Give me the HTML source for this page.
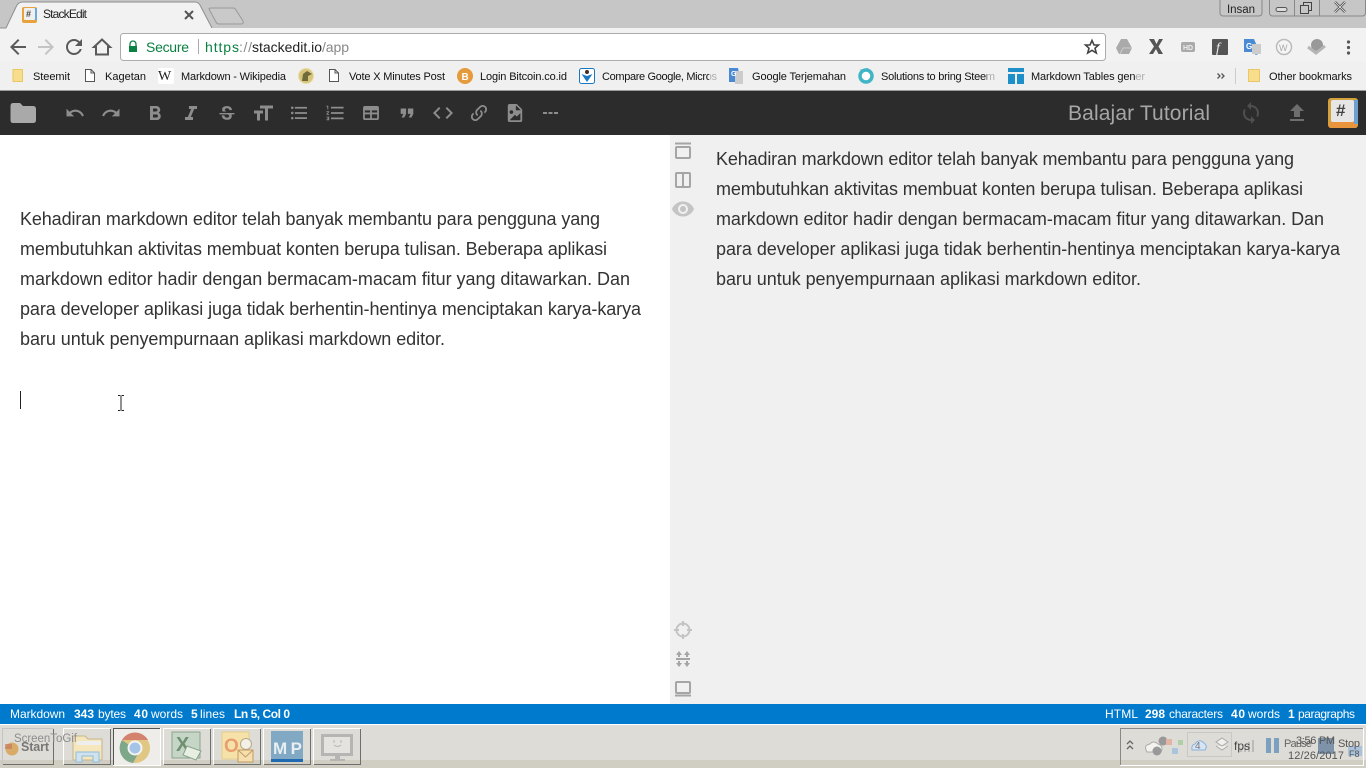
<!DOCTYPE html>
<html><head><meta charset="utf-8"><title>StackEdit</title>
<style>
html,body{margin:0;padding:0;width:1366px;height:768px;overflow:hidden;background:#fff}
svg{display:block;position:absolute;left:0;top:0}
text{font-family:"Liberation Sans",sans-serif}
.bm{font-size:11px;fill:#111}
.s{font-size:12px;fill:#fff}
.b{font-weight:bold}
.p{font-size:18px;fill:#333}
</style></head><body>
<svg width="1366" height="768" viewBox="0 0 1366 768">
<!-- tab strip -->
<rect width="1366" height="29" fill="#c6c6c6"/>
<rect y="28" width="1366" height="1" fill="#999"/>
<path d="M0 28H6L16 7Q18 2 23 2H195Q199 2 201 7L212 28H1366V62H0Z" fill="#f2f2f2"/>
<path d="M0 28H6L16 7Q18 2 23 2H195Q199 2 201 7L212 28" fill="none" stroke="#8f8f8f"/>
<path d="M209 9Q209 8 211 8H233Q235 8 236 10L243 21Q244 24 241 24H219Q217 24 216 22Z" fill="#c9c9c9" stroke="#999"/>
<rect x="22" y="7" width="15" height="16" rx="2" fill="#e8a33d"/><rect x="34" y="8" width="3" height="12" fill="#6fa8dc"/><rect x="24" y="8" width="11" height="12" rx="1" fill="#f0f0f0"/>
<text x="26" y="17" font-size="9" font-weight="bold" fill="#444">#</text>
<text x="43" y="18" font-size="12" fill="#222" textLength="44">StackEdit</text>
<path d="M185 11L193 19M193 11L185 19" stroke="#555" stroke-width="2"/>
<!-- window controls -->
<rect x="1220" y="-3" width="42" height="19" rx="3" fill="#c6c6c6" stroke="#888"/>
<text x="1227" y="13" font-size="11.5" fill="#222" textLength="28">Insan</text>
<rect x="1269.500" y="-3" width="96" height="19" rx="3" fill="#c6c6c6" stroke="#888"/>
<path d="M1294.500 0V16M1319.500 0V16" stroke="#888"/>
<rect x="1276" y="7.500" width="11" height="4" rx="2" fill="#ddd" stroke="#555"/>
<rect x="1300.500" y="5.500" width="8" height="8" fill="none" stroke="#444"/><path d="M1303.500 5V2.500H1311.500V10.500H1309" fill="none" stroke="#444"/>
<path d="M1335 2L1345 12M1345 2L1335 12" stroke="#555" stroke-width="2.500"/><path d="M1335 2L1345 12M1345 2L1335 12" stroke="#eee" stroke-width=".8"/>
<!-- nav -->
<g transform="translate(6,35)" fill="#5a5a5a"><path d="M20 11H7.830l5.590-5.590L12 4l-8 8 8 8 1.410-1.410L7.830 13H20v-2z"/></g>
<g transform="translate(34,35)" fill="#c4c4c4"><path d="M4 11h12.170l-5.590-5.590L12 4l8 8-8 8-1.410-1.410L16.170 13H4v-2z"/></g>
<g transform="translate(62,35)" fill="#5a5a5a"><path d="M17.650 6.350C16.200 4.900 14.210 4 12 4c-4.420 0-7.990 3.580-7.990 8s3.570 8 7.990 8c3.730 0 6.840-2.550 7.730-6h-2.080c-.82 2.330-3.040 4-5.650 4-3.310 0-6-2.690-6-6s2.690-6 6-6c1.660 0 3.140.69 4.220 1.780L13 11h7V4l-2.350 2.350z"/></g>
<path d="M102 39.500L110 47H108V54.500H96V47H94Z" fill="none" stroke="#5a5a5a" stroke-width="2"/>
<rect x="120.500" y="33.500" width="985" height="27" rx="3" fill="#fff" stroke="#ababab"/>
<path d="M130 46V44a3 3 0 0 1 6 0V46" fill="none" stroke="#0b8043" stroke-width="1.300"/><rect x="129" y="46" width="8" height="6" fill="#0b8043"/>
<text x="146" y="52" font-size="14" fill="#0b8043" textLength="43">Secure</text>
<rect x="198" y="39" width="1" height="15" fill="#aaa"/>
<text x="205" y="52" font-size="14" fill="#0b8043" textLength="34">https</text>
<text x="239" y="52" font-size="14" fill="#888" textLength="13">://</text>
<text x="252" y="52" font-size="14" fill="#222" textLength="70">stackedit.io</text>
<text x="322" y="52" font-size="14" fill="#888" textLength="27">/app</text>
<path d="M1092 40.500L1094 45H1098.500L1095 48.200L1096.300 53L1092 50.300L1087.700 53L1089 48.200L1085.500 45H1090Z" fill="none" stroke="#444" stroke-width="1.600"/>
<!-- extensions -->
<path d="M1121 39H1127L1132 48L1129 54H1119L1116 48Z" fill="#aaa"/><path d="M1120 54L1123 48H1132" stroke="#ccc" fill="none"/>
<path d="M1149 39H1154L1156.500 44L1159 39H1163L1158.500 46.500L1163 54H1158.500L1156 49L1153 54H1149L1154 46.500Z" fill="#555"/>
<rect x="1181" y="42" width="14" height="10" rx="2" fill="#aaa"/><text x="1183" y="50" font-size="7" font-weight="bold" fill="#eee">HD</text>
<rect x="1212" y="39" width="16" height="16" rx="1" fill="#555"/><text x="1216" y="52" font-size="14" style="font-family:'Liberation Serif',serif;font-style:italic" fill="#eee">f</text>
<path d="M1244 39H1254L1260 53L1256 55L1252 52H1244Z" fill="#4a8ad4"/><rect x="1252" y="44" width="9" height="10" fill="#ccc"/><text x="1246" y="49" font-size="8" font-weight="bold" fill="#fff">G</text>
<circle cx="1284" cy="47" r="7.500" fill="#f5f5f5" stroke="#bbb" stroke-width="1.500"/><text x="1279" y="51" font-size="9" fill="#aaa">W</text>
<circle cx="1317" cy="45" r="6" fill="#999"/><path d="M1308 47L1316 53L1325 46" fill="none" stroke="#b5b5b5" stroke-width="3"/>
<circle cx="1348.500" cy="42" r="1.600" fill="#555"/><circle cx="1348.500" cy="47.500" r="1.600" fill="#555"/><circle cx="1348.500" cy="53" r="1.600" fill="#555"/>
<!-- bookmarks -->
<rect y="62" width="1366" height="28" fill="#f0f0f0"/>
<rect y="90" width="1366" height="1" fill="#9b9b9b"/>
<path d="M13 69.500H22.500V81.500H13Z" fill="#f8dd8c" stroke="#e8c765"/>
<path d="M85.500 69.500H91L94.500 73V81.500H85.500Z" fill="#fff" stroke="#555"/><path d="M91 69.500V73H94.500" fill="none" stroke="#555"/>
<rect x="158" y="68" width="16" height="16" rx="2" fill="#fff"/><text x="158" y="80" font-size="14" style="font-family:'Liberation Serif',serif" fill="#222" textLength="16">W</text>
<circle cx="306" cy="76" r="7.500" fill="#d9c47c" stroke="#e8dca8"/><path d="M302 81L303 74L307 71L312 74L308 76V81Z" fill="#6f6a3a"/>
<path d="M329.500 69.500H335L338.500 73V81.500H329.500Z" fill="#fff" stroke="#555"/><path d="M335 69.500V73H338.500" fill="none" stroke="#555"/>
<circle cx="465" cy="76" r="8" fill="#e59a3c"/><text x="461.500" y="80" font-size="10" font-weight="bold" fill="#fff">B</text>
<rect x="579.500" y="68.500" width="15" height="15" rx="2" fill="#fff" stroke="#1a78c2"/><path d="M581.500 74L587 76L592.500 74L587 82Z" fill="#1a78c2"/><circle cx="587" cy="72" r="2" fill="#4a2c22"/>
<path d="M729 68H738L741 82H729Z" fill="#4a8ad4"/><rect x="735" y="71" width="8" height="13" fill="#ccc"/><text x="731" y="76" font-size="7" font-weight="bold" fill="#fff">G</text>
<circle cx="866" cy="76" r="6" fill="#fff" stroke="#3fb5c6" stroke-width="3.500"/><path d="M859 70L868 68V71Z" fill="#3fb5c6"/>
<rect x="1008" y="68" width="16" height="4" fill="#1f8fc9"/><rect x="1008" y="74" width="7" height="10" fill="#1f8fc9"/><rect x="1017" y="74" width="7" height="10" fill="#1f8fc9"/>
<path d="M1217.500 73.500L1220 76L1217.500 78.500M1221.500 73.500L1224 76L1221.500 78.500" fill="none" stroke="#555" stroke-width="1.300"/>
<rect x="1235" y="68" width="1" height="16" fill="#ccc"/>
<path d="M1248.500 69.500H1259.500V81.500H1248.500Z" fill="#f8dd8c" stroke="#e8c765"/>
<text class="bm" x="33" y="80" textLength="37">Steemit</text>
<text class="bm" x="105" y="80" textLength="41">Kagetan</text>
<text class="bm" x="181" y="80" textLength="105">Markdown - Wikipedia</text>
<text class="bm" x="349" y="80" textLength="96">Vote X Minutes Post</text>
<text class="bm" x="480" y="80" textLength="87">Login Bitcoin.co.id</text>
<text class="bm" x="602" y="80" textLength="115">Compare Google, Micros</text>
<text class="bm" x="752" y="80" textLength="94">Google Terjemahan</text>
<text class="bm" x="881" y="80" textLength="114">Solutions to bring Steem</text>
<text class="bm" x="1031" y="80" textLength="114">Markdown Tables gener</text>
<text class="bm" x="1269" y="80" textLength="83">Other bookmarks</text>
<rect x="709" y="68" width="9" height="16" fill="#f0f0f0" opacity=".7"/><rect x="987" y="68" width="9" height="16" fill="#f0f0f0" opacity=".7"/><rect x="1136" y="68" width="9" height="16" fill="#f0f0f0" opacity=".7"/>
<!-- dark nav -->
<rect y="91" width="1366" height="44" fill="#2c2c2c"/>
<path d="M10.500 106Q10.500 103 13 103H20L23 106H33Q36 106 36 109V120Q36 123 33 123H13Q10.500 123 10.500 120Z" fill="#a9a9a9"/>
<g fill="#8d8d8d">
<g transform="translate(64.800,102.800) scale(.85)"><path d="M12.500 8c-2.650 0-5.050.99-6.900 2.600L2 7v9h9l-3.620-3.620c1.390-1.160 3.160-1.880 5.120-1.880 3.540 0 6.550 2.310 7.600 5.500l2.370-.78C21.080 11.030 17.150 8 12.500 8z"/></g>
<g transform="translate(100.800,102.800) scale(.85)"><path d="M18.400 10.600C16.550 8.990 14.150 8 11.500 8c-4.650 0-8.580 3.030-9.960 7.220L3.900 16c1.050-3.190 4.050-5.500 7.600-5.500 1.950 0 3.730.72 5.120 1.880L13 16h9V7l-3.600 3.600z"/></g>
<g transform="translate(143,102)"><path d="M15.600 10.790c.97-.67 1.650-1.770 1.650-2.790 0-2.260-1.750-4-4-4H7v14h7.040c2.090 0 3.710-1.700 3.710-3.790 0-1.520-.86-2.820-2.150-3.420zM10 6.500h3c.83 0 1.500.67 1.500 1.500s-.67 1.500-1.500 1.500h-3v-3zm3.500 9H10v-3h3.500c.83 0 1.500.67 1.500 1.500s-.67 1.500-1.500 1.500z"/></g>
<g transform="translate(179,102)"><path d="M10 4v3h2.210l-3.420 8H6v3h8v-3h-2.210l3.420-8H18V4z"/></g>
<g transform="translate(218.800,104.800) scale(.68)"><path d="M23,12V14H18.610C19.610,16.140 19.560,22 12.380,22C4.050,22.050 4.370,15.500 4.370,15.500L8.340,15.550C8.370,18.920 11.500,18.920 12.120,18.880C12.760,18.830 15.150,18.840 15.340,16.500C15.420,15.410 14.320,14.580 13.120,14H1V12H23M19.410,7.890L15.430,7.860C15.430,7.860 15.600,5.090 12.150,5.080C8.700,5.060 9,7.280 9,7.560C9.040,7.840 9.340,9.220 12,9.880H5.710C5.710,9.880 2.220,3 10.740,2C19.450,1 19.410,7.890 19.410,7.890Z"/></g>
<g transform="translate(251,101.500)"><path d="M9 4v3h5v12h3V7h5V4H9zm-6 8h3v7h3v-7h3V9H3v3z"/></g>
<g transform="translate(288.800,102.600) scale(.865)"><path d="M4 10.500c-.83 0-1.500.67-1.500 1.500s.67 1.500 1.500 1.500 1.500-.67 1.500-1.500-.67-1.500-1.500-1.500zm0-6c-.83 0-1.500.67-1.500 1.500S3.170 7.500 4 7.500 5.500 6.830 5.500 6 4.830 4.500 4 4.500zm0 12c-.83 0-1.500.68-1.500 1.500s.68 1.500 1.500 1.500 1.500-.68 1.500-1.500-.67-1.500-1.500-1.500zM7 19h14v-2H7v2zm0-6h14v-2H7v2zm0-8v2h14V5H7z"/></g>
<g transform="translate(324.650,102.200) scale(.9)"><path d="M2 17h2v.5H3v1h1v.5H2v1h3v-4H2v1zm1-9h1V4H2v1h1v3zm-1 3h1.800L2 13.100v.9h3v-1H3.200L5 10.900V10H2v1zm5-6v2h14V5H7zm0 14h14v-2H7v2zm0-6h14v-2H7v2z"/></g>
<g transform="translate(360.440,102.440) scale(.88)"><path fill-rule="evenodd" d="M5 4H19A2 2 0 0 1 21 6V18A2 2 0 0 1 19 20H5A2 2 0 0 1 3 18V6A2 2 0 0 1 5 4ZM5 9V11.500H11V9ZM13 9V11.500H19V9ZM5 13.500V18H11V13.500ZM13 13.500V18H19V13.500Z"/></g>
<g transform="translate(396.200,102.200) scale(.9)"><path d="M6 17h3l2-4V7H5v6h3zm8 0h3l2-4V7h-6v6h3z"/></g>
<g transform="translate(431,101)"><path d="M9.400 16.600L4.800 12l4.600-4.600L8 6l-6 6 6 6 1.400-1.400zm5.200 0l4.600-4.600-4.600-4.600L16 6l6 6-6 6-1.400-1.400z"/></g>
<g transform="translate(468.560,102.560) scale(.87)"><path d="M10.590,13.410C11,13.800 11,14.440 10.590,14.830C10.200,15.220 9.560,15.220 9.170,14.830C7.220,12.880 7.220,9.710 9.170,7.760V7.760L12.710,4.220C14.660,2.270 17.830,2.270 19.780,4.220C21.730,6.170 21.730,9.340 19.780,11.290L18.290,12.780C18.300,11.960 18.170,11.140 17.890,10.360L18.360,9.880C19.540,8.710 19.540,6.810 18.360,5.640C17.190,4.460 15.290,4.460 14.120,5.640L10.590,9.170C9.410,10.340 9.410,12.240 10.590,13.410M13.410,9.170C13.800,8.780 14.440,8.780 14.830,9.170C16.780,11.120 16.780,14.290 14.830,16.240V16.240L11.290,19.780C9.340,21.730 6.170,21.730 4.220,19.780C2.270,17.830 2.270,14.660 4.220,12.710L5.710,11.220C5.700,12.040 5.830,12.860 6.110,13.650L5.640,14.120C4.460,15.290 4.460,17.190 5.640,18.360C6.810,19.540 8.710,19.540 9.880,18.360L13.410,14.830C14.590,13.660 14.590,11.760 13.410,10.590C13,10.200 13,9.560 13.410,9.170Z"/></g>
<g transform="translate(504.200,102.200) scale(.9)"><path d="M13 9h5.500L13 3.500V9M6 2h8l6 6v12a2 2 0 0 1-2 2H6a2 2 0 0 1-2-2V4a2 2 0 0 1 2-2m0 18h12v-8l-4 4-2-2-6 6M8 9a2 2 0 0 0-2 2 2 2 0 0 0 2 2 2 2 0 0 0 2-2 2 2 0 0 0-2-2z"/></g>
<rect x="543" y="112" width="4" height="2"/><rect x="548.500" y="112" width="4" height="2"/><rect x="554" y="112" width="4" height="2"/>
</g>
<text x="1068" y="120" font-size="21" fill="#a6a6a6" textLength="142">Balajar Tutorial</text>
<g transform="translate(1239,101)" fill="#4f4f4f"><path d="M12 4V1L8 5l4 4V6c3.310 0 6 2.690 6 6 0 1.010-.25 1.970-.7 2.800l1.460 1.460C19.540 15.030 20 13.570 20 12c0-4.420-3.580-8-8-8zm0 14c-3.310 0-6-2.690-6-6 0-1.010.25-1.970.7-2.800L5.240 7.740C4.460 8.970 4 10.430 4 12c0 4.420 3.580 8 8 8v3l4-4-4-4v3z"/></g>
<g transform="translate(1285,101)" fill="#6e6e6e"><path d="M5 20h14v-2H5v2zm0-10h4v6h6v-6h4l-7-7-7 7z"/></g>
<rect x="1328" y="98" width="30" height="30" rx="3" fill="#d4a23c"/><rect x="1329" y="122" width="28" height="6" rx="2" fill="#e8943c"/><rect x="1354" y="100" width="4" height="24" fill="#6f9fd0"/><rect x="1331" y="100" width="23" height="22" rx="2" fill="#e6e6e6"/>
<text x="1336" y="116" font-size="17" font-weight="bold" fill="#444">#</text>
<!-- panes -->
<rect x="670" y="135" width="696" height="569" fill="#f0f0f0"/>
<g fill="none" stroke="#a5a5a5" stroke-width="2">
<rect x="676" y="147" width="14" height="11" rx="1"/><path d="M675 143.500H691"/>
<rect x="676" y="173" width="14" height="14" rx="1"/><path d="M683 173V187"/>
<rect x="676" y="682" width="14" height="11" rx="1"/><path d="M675 695.500H691"/>
<path d="M676 659H690"/>
</g>
<g fill="none" stroke="#c4c4c4" stroke-width="2"><circle cx="683" cy="630" r="6.500"/><path d="M683 621V626M683 634V639M674 630H679M687 630H692"/></g>
<g transform="translate(671,197)" fill="#c4c4c4"><path d="M12 4.500C7 4.500 2.730 7.610 1 12c1.730 4.390 6 7.500 11 7.500s9.270-3.110 11-7.500c-1.730-4.390-6-7.500-11-7.500zM12 17c-2.760 0-5-2.240-5-5s2.240-5 5-5 5 2.240 5 5-2.240 5-5 5zm0-8c-1.660 0-3 1.340-3 3s1.340 3 3 3 3-1.340 3-3-1.340-3-3-3z"/></g>
<g fill="#a5a5a5"><path d="M679 651L682 655H680V657H678V655H676ZM687 651L690 655H688V657H686V655H684ZM678 661H680V663H682L679 667L676 663H678ZM686 661H688V663H690L687 667L684 663H686Z"/></g>
<text class="p" x="20" y="225" textLength="580">Kehadiran markdown editor telah banyak membantu para pengguna yang</text>
<text class="p" x="20" y="255" textLength="587">membutuhkan aktivitas membuat konten berupa tulisan. Beberapa aplikasi</text>
<text class="p" x="20" y="285" textLength="610">markdown editor hadir dengan bermacam-macam fitur yang ditawarkan. Dan</text>
<text class="p" x="20" y="315" textLength="621">para developer aplikasi juga tidak berhentin-hentinya menciptakan karya-karya</text>
<text class="p" x="20" y="345" textLength="425">baru untuk penyempurnaan aplikasi markdown editor.</text>
<text class="p" x="716" y="165" textLength="578">Kehadiran markdown editor telah banyak membantu para pengguna yang</text>
<text class="p" x="716" y="195" textLength="587">membutuhkan aktivitas membuat konten berupa tulisan. Beberapa aplikasi</text>
<text class="p" x="716" y="225" textLength="608">markdown editor hadir dengan bermacam-macam fitur yang ditawarkan. Dan</text>
<text class="p" x="716" y="255" textLength="624">para developer aplikasi juga tidak berhentin-hentinya menciptakan karya-karya</text>
<text class="p" x="716" y="285" textLength="425">baru untuk penyempurnaan aplikasi markdown editor.</text>
<rect x="20" y="391" width="1" height="18" fill="#222"/>
<path d="M118 395.500H120.500M121.500 395.500H124M118 410.500H120.500M121.500 410.500H124M121 396V410" stroke="#222" fill="none"/>
<!-- status -->
<rect y="704" width="1366" height="20" fill="#007acc"/>
<text class="s" x="10" y="718" textLength="55">Markdown</text>
<text class="s b" x="74" y="718" textLength="20">343</text><text class="s" x="98" y="718" textLength="28">bytes</text>
<text class="s b" x="134" y="718" textLength="14">40</text><text class="s" x="151" y="718" textLength="32">words</text>
<text class="s b" x="191" y="718" textLength="6">5</text><text class="s" x="200" y="718" textLength="25">lines</text>
<text class="s b" x="234" y="718" textLength="56">Ln 5, Col 0</text>
<text class="s" x="1105" y="718" textLength="33">HTML</text>
<text class="s b" x="1145" y="718" textLength="20">298</text><text class="s" x="1169" y="718" textLength="54">characters</text>
<text class="s b" x="1231" y="718" textLength="14">40</text><text class="s" x="1248" y="718" textLength="32">words</text>
<text class="s b" x="1288" y="718" textLength="5">1</text><text class="s" x="1298" y="718" textLength="57">paragraphs</text>
<!-- taskbar -->
<rect y="724" width="1366" height="1" fill="#fff"/>
<rect y="725" width="1366" height="35" fill="#dedcd7"/>
<rect y="760" width="1366" height="8" fill="#d0cec3"/>
<g fill="none" stroke="#6e6e6e">
<path d="M2.500 764.500V728.500H53.500" stroke="#c4c4c4"/><path d="M53.500 729V764.500H3"/>
<path d="M63.500 764.500V728.500H110.500" stroke="#fff"/><path d="M110.500 729V764.500H64"/>
<path d="M163.500 764.500V728.500H210.500" stroke="#fff"/><path d="M210.500 729V764.500H164"/>
<path d="M213.500 764.500V728.500H260.500" stroke="#fff"/><path d="M260.500 729V764.500H214"/>
<path d="M263.500 764.500V728.500H310.500" stroke="#fff"/><path d="M310.500 729V764.500H264"/>
<path d="M313.500 764.500V728.500H360.500" stroke="#fff"/><path d="M360.500 729V764.500H314"/>
</g>
<rect x="113" y="728" width="47" height="37" fill="#eeedea"/>
<path d="M113.500 765V728.500H160" stroke="#555" fill="none"/><path d="M113 765.500H160.500V728" stroke="#fff" fill="none"/>
<circle cx="12" cy="749" r="6.500" fill="#d6a04c" opacity=".8"/><path d="M5 744H12V749H5Z" fill="#c87a5c" opacity=".7"/>
<text x="21" y="751" font-size="12.500" font-weight="bold" fill="#777" textLength="28">Start</text>
<!-- folder -->
<path d="M73 736H85L88 739H102V760H73Z" fill="#f5e6bc" stroke="#c4b68e"/><rect x="77" y="741" width="24" height="4" fill="#eee"/>
<path d="M76 762V752H99V762H93V756H82V762Z" fill="#cfe2ee" stroke="#8fbcdb"/>
<text x="14" y="742" font-size="11.500" fill="#8d8d8d" textLength="63">ScreenToGif</text>
<!-- chrome -->
<circle cx="135" cy="748" r="15" fill="#e0c784"/><path d="M122 740A15 15 0 0 1 148 740H135Z" fill="#d4826e"/><path d="M122 740A15 15 0 0 0 133 763L139 752Z" fill="#7fa88a"/><circle cx="135" cy="748" r="7.500" fill="#f4f4f4"/><circle cx="135" cy="748" r="5.500" fill="#a5c4e8"/>
<!-- excel -->
<rect x="172" y="732" width="28" height="26" fill="#c5d6c6" stroke="#8aa38c"/><text x="176" y="751" font-size="20" font-weight="bold" fill="#6f8f72">X</text><path d="M187 746L201 751L196 760L183 755Z" fill="#e6efe2" stroke="#8aa38c"/>
<!-- outlook -->
<rect x="222" y="732" width="27" height="27" fill="#f6e2a8" stroke="#e5cd8a"/><text x="224" y="752" font-size="19" font-weight="bold" fill="#e89f70">O</text><circle cx="246" cy="744" r="5.500" fill="#f3f0e6" stroke="#b3a98c"/><rect x="238" y="750" width="15" height="12" fill="#f6dfae" stroke="#c49a60"/><path d="M238 750L245.500 757L253 750" fill="none" stroke="#c49a60"/>
<!-- MP -->
<rect x="271" y="731" width="32" height="31" fill="#82a9c4"/><rect x="271" y="759" width="32" height="3" fill="#1f6ab0"/>
<text x="273" y="754" font-size="17" font-weight="bold" fill="#e8eef2" textLength="29">MP</text>
<!-- monitor -->
<rect x="322.500" y="735.500" width="29" height="19" fill="#e4e3df" stroke="#b5b5b3" stroke-width="3"/><rect x="335" y="756" width="5" height="3" fill="#b5b5b3"/><rect x="330" y="759" width="15" height="2" fill="#b5b5b3"/>
<path d="M334 740V743M341 740V743M334 745Q337.500 748 341 745" fill="none" stroke="#b5b5b3"/>
<!-- tray -->
<path d="M1120.500 765V728.500H1363" stroke="#888" fill="none"/><path d="M1120 765.500H1363.500V728" stroke="#fff" fill="none"/>
<path d="M1127 744L1130 741L1133 744M1127 749L1130 746L1133 749" fill="none" stroke="#666" stroke-width="1.300"/>
<path d="M1147 752Q1143 745 1150 744Q1153 740 1158 744Q1164 746 1161 752Z" fill="#f3f2ee" stroke="#aaa"/>
<circle cx="1157" cy="751" r="4.500" fill="#999"/><circle cx="1163" cy="741" r="4.500" fill="#999"/>
<rect x="1166" y="739" width="6" height="6" fill="#e3b3a3"/><rect x="1178" y="740" width="5" height="5" fill="#b0cfa8"/><rect x="1172" y="748" width="6" height="6" fill="#a9c4dc"/>
<rect x="1187.500" y="732.500" width="44" height="24" fill="none" stroke="#c8c8c4"/>
<path d="M1192 750Q1191 745 1195 744Q1199 738 1204 743Q1208 746 1205 750Z" fill="#d6e4f4" stroke="#8ab0dc"/>
<text x="1195" y="749" font-size="10" fill="#777">4</text>
<path d="M1216 742L1222 746L1228 742L1222 738ZM1216 746L1222 750L1228 746" fill="#f1f0ec" stroke="#aaa"/>
<rect x="1240" y="748" width="2" height="4" fill="#bbb"/><rect x="1244" y="745" width="2" height="7" fill="#bbb"/><rect x="1248" y="742" width="2" height="10" fill="#bbb"/><rect x="1252" y="740" width="2" height="12" fill="#bbb"/>
<text x="1234" y="750" font-size="12" fill="#444" textLength="16">fps</text>
<rect x="1266" y="738" width="5" height="15" fill="#7ba0c0"/><rect x="1274" y="738" width="5" height="15" fill="#7ba0c0"/>
<rect x="1318" y="738" width="16" height="16" fill="#7e93aa"/>
<text x="1284" y="747" font-size="11" fill="#666" textLength="28">Pause</text>
<text x="1296" y="744" font-size="11" fill="#555" textLength="39">3:56 PM</text>
<text x="1288" y="759" font-size="11" fill="#555" textLength="56">12/26/2017</text>
<rect x="1348" y="746" width="14" height="10" fill="#9dbcdc" opacity=".8"/>
<text x="1338" y="747" font-size="11" fill="#555" textLength="22">Stop</text>
<text x="1349" y="757" font-size="9" fill="#555">F8</text>
</svg>
</body></html>
